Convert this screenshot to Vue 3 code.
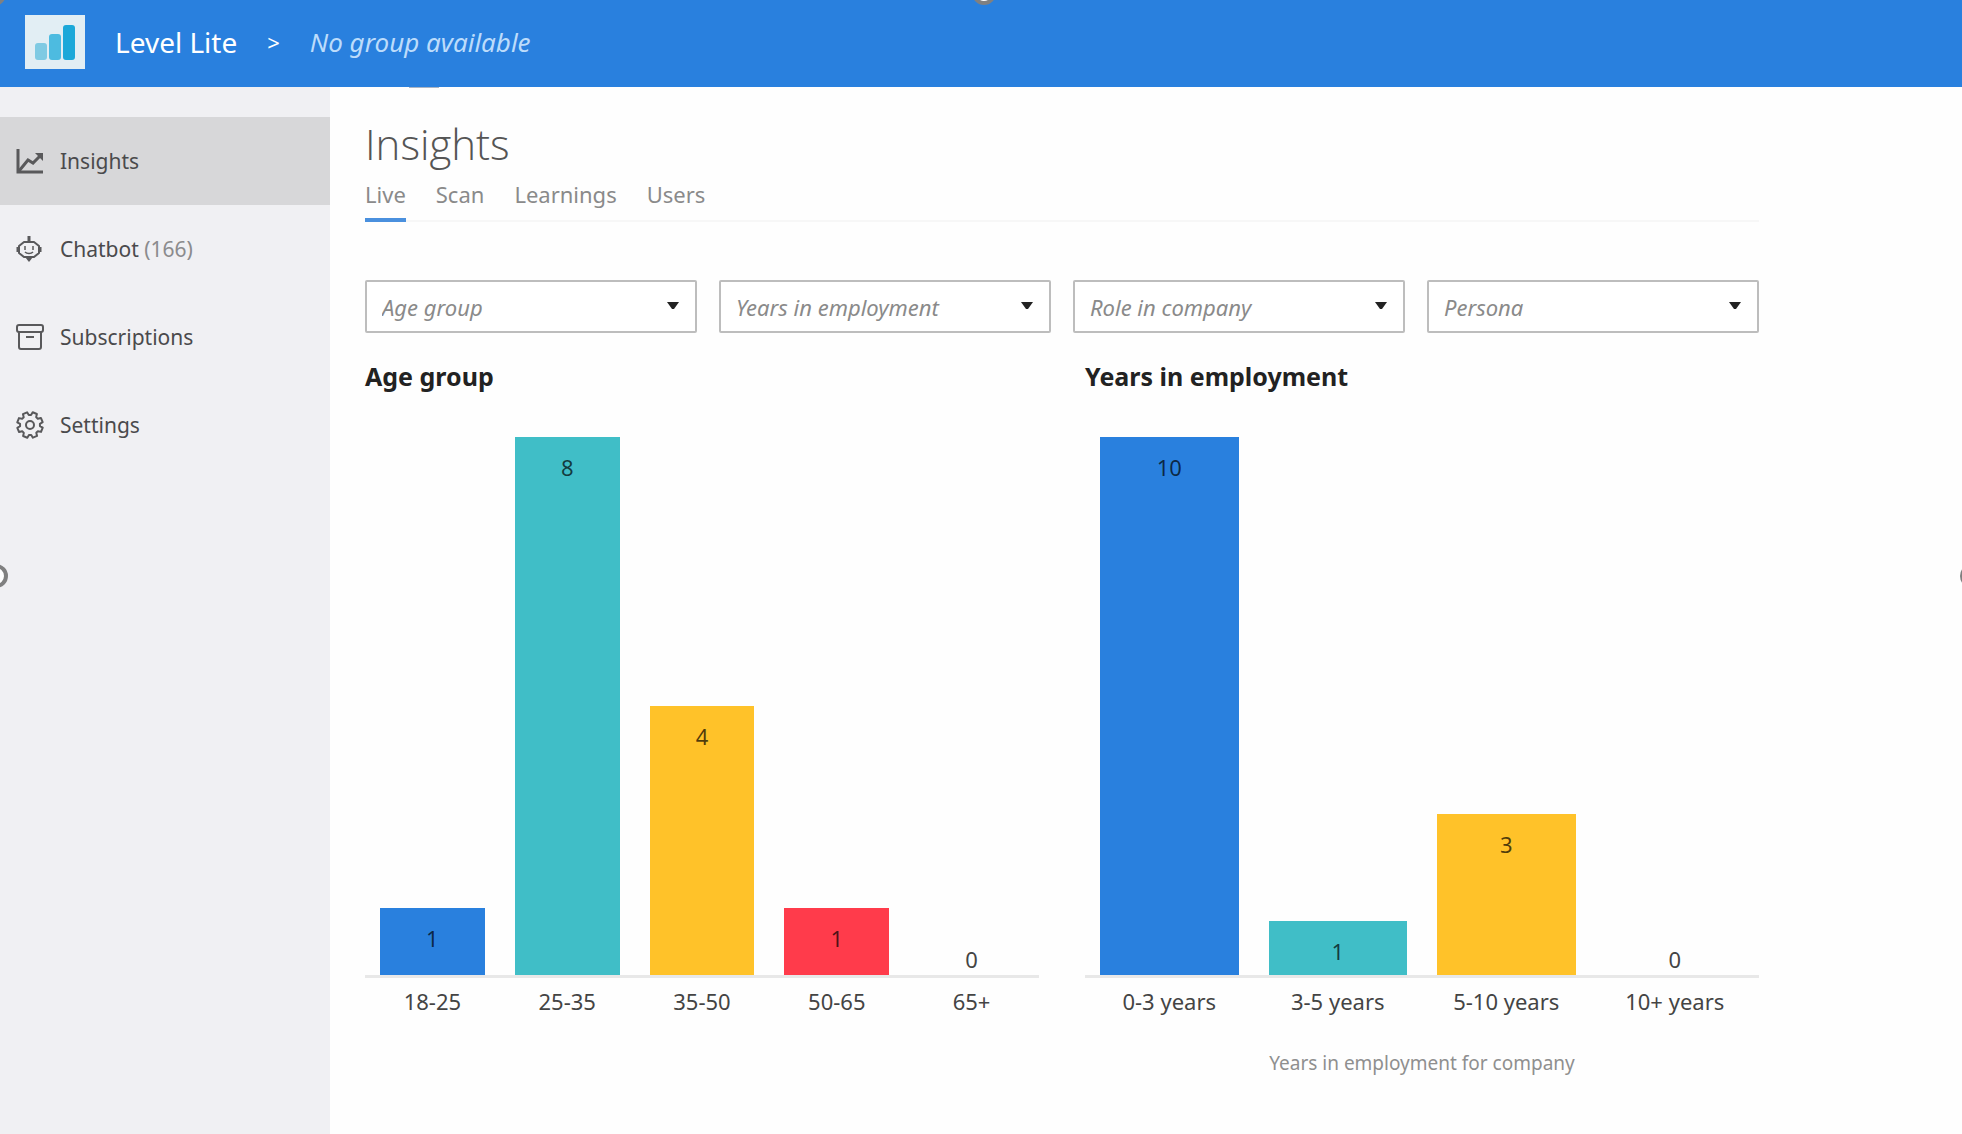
<script setup>
import { ref } from 'vue'

const navItems = [
  { id: 'insights', label: 'Insights' },
  { id: 'chatbot', label: 'Chatbot', count: 166 },
  { id: 'subscriptions', label: 'Subscriptions' },
  { id: 'settings', label: 'Settings' }
]
const activeNav = ref('insights')

const tabs = ['Live', 'Scan', 'Learnings', 'Users']
const activeTab = ref('Live')

const ageBands = ['18-25', '25-35', '35-50', '50-65', '65+']
const tenures = ['0-3 years', '3-5 years', '5-10 years', '10+ years']

const filters = [
  { id: 'age', label: 'Age group', options: ageBands },
  { id: 'years', label: 'Years in employment', options: tenures },
  { id: 'role', label: 'Role in company', options: [] },
  { id: 'persona', label: 'Persona', options: [] }
]

const colors = ['#2980de', '#40bec7', '#ffc229', '#ff3b4b', '#8e8e93']

const charts = [
  { title: 'Age group', labels: ageBands, values: [1, 8, 4, 1, 0], caption: '' },
  {
    title: 'Years in employment',
    labels: tenures,
    values: [10, 1, 3, 0],
    caption: 'Years in employment for company'
  }
]

const share = (chart, value) => `${(value / Math.max(...chart.values)) * 100}%`

// Outline of an eight-toothed gear centred in a 28 unit box.
const gearPoints = Array.from({ length: 8 }, (_, tooth) =>
  [[-16, 10], [-10, 13], [10, 13], [16, 10]].map(([offset, radius]) => {
    const angle = ((tooth * 45 + 22 + offset) * Math.PI) / 180
    return `${(14 + radius * Math.cos(angle)).toFixed(2)},${(14 + radius * Math.sin(angle)).toFixed(2)}`
  }).join(' ')
).join(' ')
</script>

<template>
  <div class="app">
    <header class="topbar">
      <svg class="logo" viewBox="0 0 60 54" preserveAspectRatio="none" aria-hidden="true">
        <rect width="60" height="54" fill="#e2eef4" />
        <rect x="10" y="28" width="12" height="17" rx="3" fill="#7fcae3" />
        <rect x="24" y="19" width="12" height="26" rx="3" fill="#4dbbe0" />
        <rect x="38" y="10" width="12" height="35" rx="3" fill="#1ba8d9" />
      </svg>
      <span class="brand">Level Lite</span>
      <span class="chevron">&gt;</span>
      <span class="group">No group available</span>
    </header>

    <div class="body">
      <nav class="sidebar" aria-label="Main">
        <a
          v-for="item in navItems"
          :key="item.id"
          href="#"
          class="nav-item"
          :class="{ active: item.id === activeNav }"
          @click.prevent="activeNav = item.id"
        >
          <svg class="nav-icon" viewBox="0 0 28 28" fill="none" stroke="currentColor" stroke-width="2" aria-hidden="true">
            <template v-if="item.id === 'insights'">
              <path d="M2 2v23h25" stroke-width="3" />
              <path d="M3 24l9-11 5 3 7-7" stroke-width="3" />
              <path d="M19 6h8v8z" fill="currentColor" stroke="none" />
            </template>
            <template v-else-if="item.id === 'chatbot'">
              <path d="M13 1v6" stroke-width="3" />
              <path d="M8 7h10l5 4v7l-5 4H8l-5-4v-7z" stroke-linejoin="round" />
              <path d="M2 12v5M24 12v5" stroke-width="3" />
              <path d="M9 22h8l-4 5z" fill="currentColor" stroke="none" />
              <path d="M9 11v4M17 11v4M9 17c2 2 6 2 8 0" stroke-width="1.5" />
            </template>
            <template v-else-if="item.id === 'subscriptions'">
              <rect x="1" y="2" width="26" height="7" rx="2" />
              <path d="M3 9v15q0 2 2 2h18q2 0 2-2V9M10 14h8" />
            </template>
            <template v-else>
              <polygon :points="gearPoints" stroke-linejoin="round" />
              <circle cx="14" cy="14" r="4" />
            </template>
          </svg>
          <span>{{ item.label }}<span v-if="item.count" class="count"> ({{ item.count }})</span></span>
        </a>
      </nav>

      <main class="content">
        <h1>Insights</h1>
        <div class="tabs" role="tablist">
          <button
            v-for="tab in tabs"
            :key="tab"
            type="button"
            role="tab"
            class="tab"
            :class="{ active: tab === activeTab }"
            :aria-selected="tab === activeTab"
            @click="activeTab = tab"
          >{{ tab }}</button>
        </div>

        <div class="filters">
          <div v-for="f in filters" :key="f.id" class="filter">
            <select :id="f.id" :aria-label="f.label">
              <option value="">{{ f.label }}</option>
              <option v-for="o in f.options" :key="o">{{ o }}</option>
            </select>
            <svg class="caret" viewBox="0 0 12 8" aria-hidden="true"><path d="M0 0h12L7 7H5z" fill="#222" /></svg>
          </div>
        </div>

        <div class="charts">
          <section v-for="chart in charts" :key="chart.title" class="chart">
            <h2>{{ chart.title }}</h2>
            <div class="plot">
              <div v-for="(value, i) in chart.values" :key="i" class="column">
                <div
                  v-if="value"
                  class="bar"
                  :style="{ height: share(chart, value), background: colors[i] }"
                >{{ value }}</div>
                <div v-else class="zero">0</div>
              </div>
            </div>
            <div class="labels">
              <span v-for="label in chart.labels" :key="label">{{ label }}</span>
            </div>
            <p v-if="chart.caption" class="caption">{{ chart.caption }}</p>
          </section>
        </div>
      </main>
    </div>

    <span class="tick"></span>
    <span class="handle corner"></span>
    <span class="handle top"></span>
    <span class="handle left"></span>
    <span class="handle right"></span>
  </div>
</template>

<style>
body {
  margin: 0;
}
</style>

<style scoped>
.app {
  position: relative;
  display: flex;
  flex-direction: column;
  min-height: 100vh;
  overflow: hidden;
  background: #fefefe;
  color: #444;
  font-family: "Noto Sans", "Open Sans", sans-serif;
  font-size: 22px;
  line-height: 28px;
}

.topbar {
  display: flex;
  align-items: center;
  box-sizing: border-box;
  height: 87px;
  padding: 0 25px 3px;
  background: #2980de;
  color: #fff;
}
.logo {
  width: 60px;
  height: 54px;
  margin-right: 30px;
}
.brand {
  font-size: 28px;
}
.chevron {
  margin: 0 30px;
}
.group {
  color: #bcdcfb;
  font-size: 26px;
  font-style: italic;
}

.body {
  display: flex;
  flex: 1;
}
.sidebar {
  flex: none;
  box-sizing: border-box;
  width: 330px;
  padding-top: 30px;
  background: #f0f0f3;
  font-size: 21px;
}
.nav-item {
  display: flex;
  align-items: center;
  gap: 16px;
  height: 88px;
  padding-left: 16px;
  color: #4a4a4c;
  text-decoration: none;
}
.nav-item.active {
  background: #d7d7d9;
}
.nav-icon {
  width: 28px;
  height: 28px;
  color: #59595b;
}
.count {
  color: #8b8b8d;
}

.content {
  flex: 1;
  padding: 27px 203px 20px 35px;
}
h1 {
  margin: 0;
  color: #555;
  font-family: "Open Sans", "Noto Sans", sans-serif;
  font-size: 42px;
  font-weight: 300;
  line-height: 60px;
}
.tabs {
  display: flex;
  gap: 30px;
  border-bottom: 2px solid #f7f7f7;
}
.tab {
  height: 48px;
  margin-bottom: -2px;
  padding: 0 0 4px;
  border: 0;
  border-bottom: 4px solid transparent;
  background: none;
  color: #8a8a8a;
  font: inherit;
}
.tab.active {
  border-color: #4a90de;
}

.filters {
  display: grid;
  grid-template-columns: repeat(4, 1fr);
  gap: 22px;
  margin-top: 58px;
}
.filter {
  position: relative;
}
select {
  box-sizing: border-box;
  width: 100%;
  height: 53px;
  padding: 0 40px 0 15px;
  border: 2px solid #bdbdbd;
  border-radius: 2px;
  appearance: none;
  background: #fff;
  color: #8a8a8a;
  font: inherit;
  font-style: italic;
}
.caret {
  position: absolute;
  top: 22px;
  right: 18px;
  width: 12px;
  height: 8px;
  pointer-events: none;
}

.charts {
  display: grid;
  grid-template-columns: 1fr 1fr;
  gap: 46px;
  margin-top: 29px;
}
h2 {
  margin: 0;
  color: #222;
  font-size: 25px;
  font-weight: 700;
  line-height: 28px;
}
.plot {
  display: flex;
  height: 538px;
  margin-top: 47px;
  border-bottom: 3px solid #e8e8e8;
}
.column {
  display: flex;
  flex: 1;
  flex-direction: column;
  justify-content: flex-end;
  padding: 0 15px;
  text-align: center;
}
.bar {
  box-sizing: border-box;
  padding-top: 16px;
  color: rgba(0, 0, 0, 0.7);
}
.zero {
  padding-bottom: 2px;
}
.labels {
  display: flex;
  margin-top: 9px;
}
.labels span {
  flex: 1;
  text-align: center;
}
.caption {
  margin: 34px 0 0;
  color: #8f8f8f;
  font-size: 19px;
  text-align: center;
}

.tick {
  position: absolute;
  top: 87px;
  left: 409px;
  width: 30px;
  height: 1px;
  background: #a9b4c4;
}
.handle {
  position: absolute;
  box-sizing: border-box;
  width: 24px;
  height: 24px;
  border: 4px solid #808080;
  border-radius: 50%;
  background: #fff;
}
.corner {
  top: -18px;
  left: -18px;
}
.top {
  top: -19px;
  left: calc(50% + 3px);
  margin-left: -12px;
}
.left {
  top: 564px;
  left: -16px;
}
.right {
  top: 564px;
  right: -22px;
}
</style>
